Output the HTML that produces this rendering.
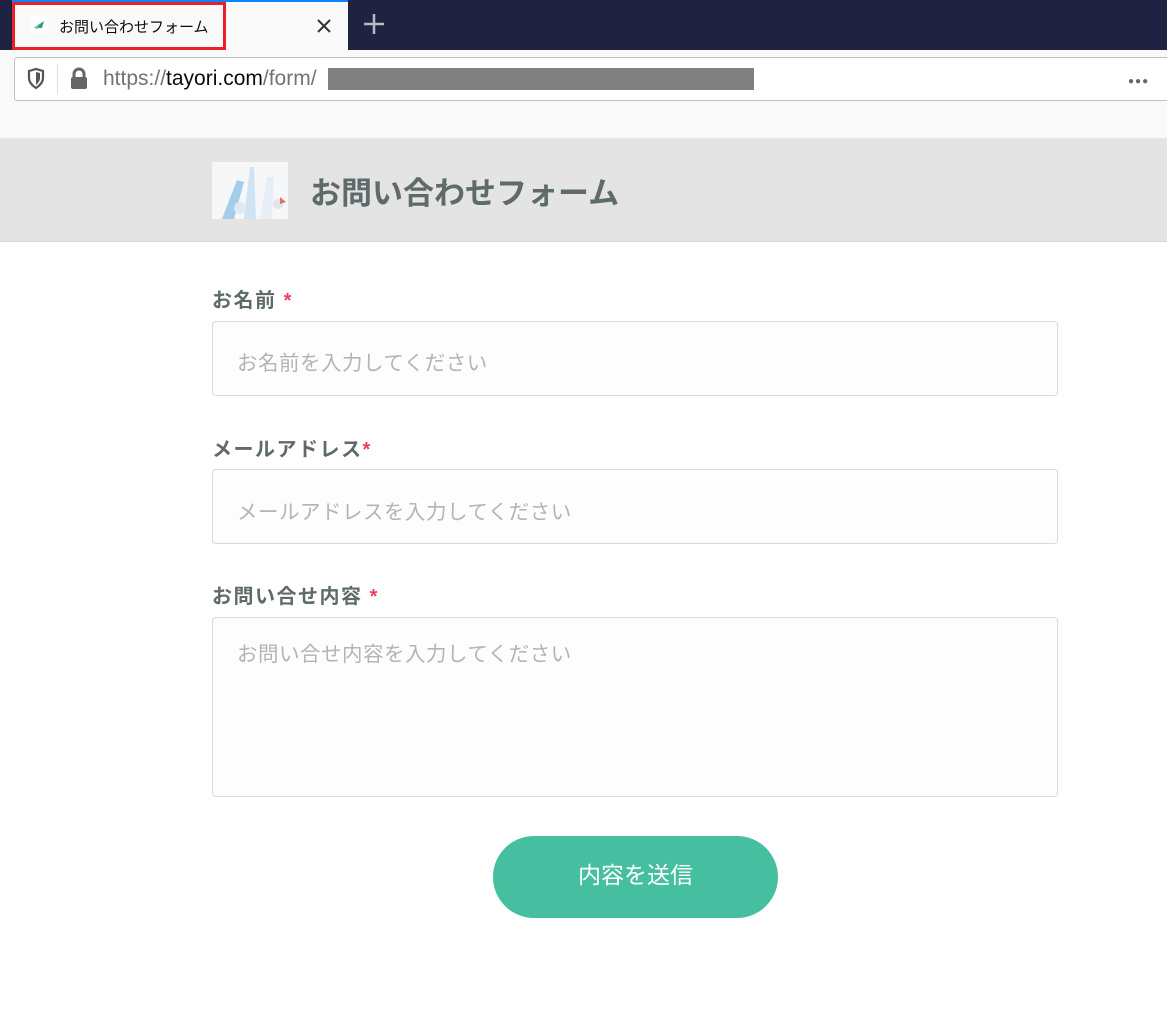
<!DOCTYPE html>
<html><head><meta charset="utf-8"><style>
body{margin:0;width:1167px;height:1012px;overflow:hidden;background:#fff;font-family:"Liberation Sans","Noto Sans CJK JP",sans-serif;position:relative}
.a{position:absolute}
.lbl{position:absolute;left:212px;font-size:20px;font-weight:bold;color:#5f6b6a;letter-spacing:1.5px}
.lbl span{color:#e8415f}
.inp{position:absolute;left:212px;width:846px;border:1px solid #d9dadc;border-radius:4px;background:#fdfdfe;box-sizing:border-box}
.ph{position:absolute;left:24px;font-size:20.5px;color:#b2b4b8;letter-spacing:0.5px}
</style></head><body>
<div class="a" style="left:0;top:0;width:1167px;height:50px;background:#1f2240"></div>
<div class="a" style="left:12px;top:0;width:336px;height:50px;background:#f9f9fa"></div>
<div class="a" style="left:12px;top:0;width:336px;height:2px;background:#0a84ff"></div>
<div class="a" style="left:12px;top:2px;width:208px;height:42px;border:3px solid #e8202a"></div>
<svg class="a" style="left:30px;top:16px" width="18" height="18"><rect width="18" height="18" fill="#fff"/><path d="M4 12 L14 5 L12 12 Z" fill="#2d9e74"/><path d="M4 12 L9 8 L8 13Z" fill="#5cc39a"/></svg>
<div class="a" style="left:59px;top:16px;font-size:15px;color:#0c0c0d">お問い合わせフォーム</div>
<svg class="a" style="left:316px;top:18px" width="16" height="16"><path d="M2 2L14 14M14 2L2 14" stroke="#333" stroke-width="2"/></svg>
<svg class="a" style="left:363px;top:13px" width="22" height="22"><path d="M11 1V21M1 11H21" stroke="#b9bac4" stroke-width="2.5"/></svg>
<div class="a" style="left:0;top:50px;width:1167px;height:88px;background:#f9f9fa"></div>
<div class="a" style="left:14px;top:57px;width:1160px;height:44px;background:#fff;border:1px solid #c1c1c3;border-radius:3px;box-sizing:border-box"></div>
<svg class="a" style="left:26px;top:68px" width="20" height="22"><path d="M3 3 L10 1 L17 3 V10 C17 15 13 18 10 20 C7 18 3 15 3 10Z" fill="none" stroke="#555" stroke-width="2.2"/><path d="M10 4 V17 C12 15 14 13 14 10 V5Z" fill="#555"/></svg>
<div class="a" style="left:57px;top:64px;width:1px;height:30px;background:#ddd"></div>
<svg class="a" style="left:69px;top:67px" width="20" height="24"><path d="M5 10 V7 A5 5 0 0 1 15 7 V10" fill="none" stroke="#666" stroke-width="3"/><rect x="2" y="10" width="16" height="12" rx="2" fill="#666"/></svg>
<div class="a" style="left:103px;top:67px;font-size:21px;color:#737373">https://<span style="color:#0c0c0d">tayori.com</span>/form/</div>
<div class="a" style="left:328px;top:68px;width:426px;height:22px;background:#808080"></div>
<div class="a" style="left:1128px;top:76px;font-size:10px;color:#666;letter-spacing:1px">●●●</div>
<div class="a" style="left:0;top:138px;width:1167px;height:103px;background:#e4e4e4;border-bottom:1px solid #d8d8d8"></div>
<svg class="a" style="left:212px;top:162px" width="76" height="57"><rect width="76" height="57" fill="#f6f7f8"/><path d="M10 57 L25 18 L32 20 L22 57Z" fill="#a5cdea"/><path d="M32 57 L38 5 L42 5 L44 57Z" fill="#cfe3f3"/><path d="M48 57 L55 15 L62 15 L60 57Z" fill="#e8eef5"/><circle cx="28" cy="46" r="6" fill="#dde9f3"/><circle cx="66" cy="42" r="5" fill="#dfe4ea"/><path d="M68 35 L74 40 L68 42Z" fill="#e0735c"/></svg>
<div class="a" style="left:310px;top:168px;font-size:31px;font-weight:bold;color:#5f6b6a">お問い合わせフォーム</div>
<div class="lbl" style="top:284px">お名前 <span>*</span></div>
<div class="inp" style="top:321px;height:75px"><div class="ph" style="top:24px">お名前を入力してください</div></div>
<div class="lbl" style="top:433px">メールアドレス<span>*</span></div>
<div class="inp" style="top:469px;height:75px"><div class="ph" style="top:25px">メールアドレスを入力してください</div></div>
<div class="lbl" style="top:580px">お問い合せ内容 <span>*</span></div>
<div class="inp" style="top:617px;height:180px"><div class="ph" style="top:19px">お問い合せ内容を入力してください</div></div>
<div class="a" style="left:493px;top:836px;width:285px;height:82px;border-radius:41px;background:#45bf9f;color:#fff;font-size:23px;text-align:center;line-height:78px">内容を送信</div>
</body></html>
